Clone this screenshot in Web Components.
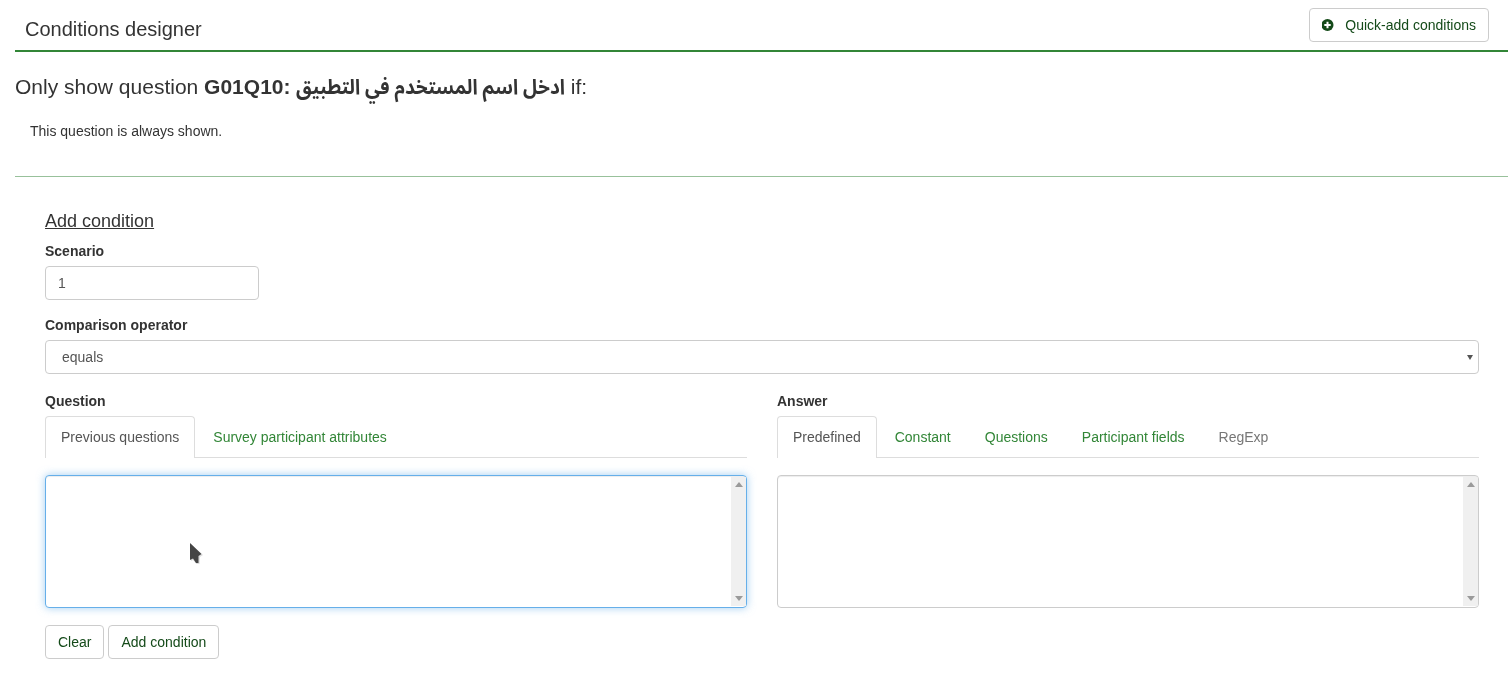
<!DOCTYPE html>
<html><head><meta charset="utf-8">
<style>
html,body{margin:0;padding:0;background:#fff}
body{font:14px/20px "Liberation Sans",sans-serif;color:#333;overflow:hidden;height:690px}
</style></head><body>
<cond-page></cond-page>
<script>
function def(name,css,html){
  customElements.define(name,class extends HTMLElement{
    constructor(){super();const r=this.attachShadow({mode:'open'});r.innerHTML='<style>'+css+'</style>'+html;}
  });
}
def('lime-btn',`:host{display:inline-flex;box-sizing:border-box;height:34px;align-items:center;padding:0 12px;border:1px solid #ccc;border-radius:4px;background:#fff;color:#144a19;font-size:14px;white-space:nowrap}`,`<slot></slot>`);
def('page-head',`:host{display:flex;justify-content:space-between;box-sizing:border-box;height:52px;margin-left:15px;border-bottom:2px solid #328637;padding:8px 19px 0 10px}
h2{margin:0;padding-top:9px;font:400 20px/24px "Liberation Sans",sans-serif;color:#333}
svg{display:block;margin:0 10px 0 0;width:13px;height:14px}`,
`<h2>Conditions designer</h2><lime-btn><svg viewBox="0 0 13 14"><circle cx="5.500" cy="7" r="6" fill="#144a19"/><path d="M5.500 3.800v6.400M2.300 7h6.400" stroke="#fff" stroke-width="2"/></svg>Quick-add conditions</lime-btn>`);
def('summary-block',`:host{display:block;box-sizing:border-box;height:125px;margin-left:15px;border-bottom:1px solid #98c19b}
h3{margin:0;padding-top:22px;font:400 21px/26px "Liberation Sans",sans-serif;color:#333;height:26px;white-space:nowrap}
b{font-weight:700}
span{display:inline-block;font-family:"Noto Sans Arabic","Liberation Sans",sans-serif;transform:scaleX(.9);transform-origin:0 50%;margin-right:-30px}
p{margin:0;padding:21px 0 0 15px;font-size:14px;line-height:20px}`,
`<h3>Only show question <b>G01Q10: <span>ادخل اسم المستخدم في التطبيق</span></b> if:</h3><p>This question is always shown.</p>`);
def('field-label',`:host{display:block;font-weight:700;font-size:14px;line-height:20px;color:#333}`,`<slot></slot>`);
def('text-box',`:host{display:flex;align-items:center;box-sizing:border-box;height:34px;padding:0 12px;border:1px solid #ccc;border-radius:4px;background:#fff;color:#555;font-size:14px;position:relative}`,
`<slot></slot><slot name="arrow"></slot>`);
def('tab-bar',`:host{display:flex;box-sizing:border-box;height:42px;border-bottom:1px solid #ddd;margin-top:5px}`,`<slot></slot>`);
def('tab-item',`:host{display:block;box-sizing:border-box;height:42px;padding:11px 18px 0 16px;color:#328637;font-size:14px;line-height:20px;white-space:nowrap}
:host([active]){color:#555;background:#fff;border:1px solid #ddd;border-bottom:0;border-radius:4px 4px 0 0;padding:10px 15px 0;margin-right:2px}
:host([off]){color:#777}`,`<slot></slot>`);
def('list-box',`:host{display:flex;justify-content:flex-end;box-sizing:border-box;height:133px;margin-top:17px;border:1px solid #ccc;border-radius:4px;background:#fff;overflow:hidden;box-shadow:inset 0 1px 1px rgba(0,0,0,.075)}
:host([focus]){border-color:#66afe9;box-shadow:inset 0 1px 1px rgba(0,0,0,.075),0 0 8px rgba(102,175,233,.6);overflow:visible}
.sb{width:15px;margin:1px 0;background:#f0f0f0;display:flex;flex-direction:column;justify-content:space-between;align-items:center;padding:5px 0 5px;box-sizing:border-box}
svg{display:block;width:8px;height:5px;fill:#9a9a9a}`,
`<div class="sb"><svg viewBox="0 0 8 5"><path d="M4 0 8 5H0z"/></svg><svg viewBox="0 0 8 5"><path d="M0 0H8L4 5z"/></svg></div>`);
def('pick-col',`:host{display:block;flex:1 1 0;min-width:0}`,`<slot></slot>`);
def('cond-page',`:host{display:block;will-change:transform}
.form{padding:32px 29px 0 45px}
h4{margin:0;font:400 18px/24px "Liberation Sans",sans-serif;color:#333;text-decoration:underline}
.g1{margin-top:8px}.g1 text-box{width:214px;margin-top:5px}
.g2{margin-top:15px}.g2 text-box{margin-top:5px;padding-left:16px}
.cols{display:flex;gap:30px;margin-top:17px;margin-right:0}
.cols pick-col:first-child{flex:0 0 702px}
.btns{display:flex;gap:4px;margin-top:17px}
i{position:absolute;right:5px;top:14px;width:0;height:0;border:3px solid transparent;border-top:5px solid #555;border-bottom:0}
.cur{position:absolute;left:188px;top:541px;width:18px;height:26px;z-index:2}`,
`<page-head></page-head><summary-block></summary-block>
<div class="form">
<h4>Add condition</h4>
<div class="g1"><field-label>Scenario</field-label><text-box>1</text-box></div>
<div class="g2"><field-label>Comparison operator</field-label><text-box>equals<i slot="arrow"></i></text-box></div>
<div class="cols">
<pick-col><field-label>Question</field-label>
<tab-bar><tab-item active>Previous questions</tab-item><tab-item>Survey participant attributes</tab-item></tab-bar>
<list-box focus></list-box></pick-col>
<pick-col><field-label>Answer</field-label>
<tab-bar><tab-item active>Predefined</tab-item><tab-item>Constant</tab-item><tab-item>Questions</tab-item><tab-item>Participant fields</tab-item><tab-item off>RegExp</tab-item></tab-bar>
<list-box></list-box></pick-col>
</div>
<div class="btns"><lime-btn>Clear</lime-btn><lime-btn>Add condition</lime-btn></div>
</div>
<svg class="cur" viewBox="0 0 18 26"><path d="M3 3 15 14 12 16 11.500 23 8.500 23 5 19 3 20z" fill="#dedede"/><path d="M2 2 13.500 13 10.500 15 10.500 22 8 22 5 17.500 2 19z" fill="#444"/></svg>`);
</script>
</body></html>
